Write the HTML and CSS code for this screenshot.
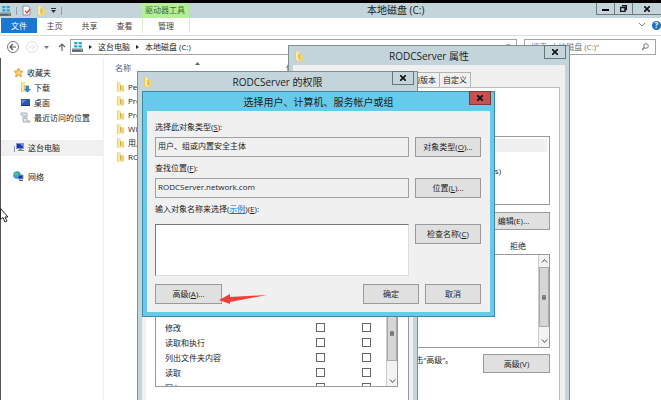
FILE: index.html
```
<!DOCTYPE html>
<html lang="zh-CN">
<head>
  <meta charset="UTF-8" />
  <meta name="viewport" content="width=device-width, initial-scale=1.0"/>
  <title>本地磁盘 (C:)</title>
  <link rel="stylesheet" href="styles.css">
</head>
<body>
  <svg class="defs" width="0" height="0" aria-hidden="true">
    <symbol id="folder" viewBox="0 0 10 10">
      <path d="M1 0h4v10H1z" fill="#e8cb67"/>
      <path d="M2 0l3 1v9l-3-1z" fill="#f8e9a4"/>
      <path d="M5 3h4v7H5z" fill="#edd47a"/>
      <path d="M5 3v5" stroke="#c8a53c" stroke-width="1"/>
    </symbol>
    <symbol id="drive" viewBox="0 0 10 11">
      <path d="M2 1h3v2H2zM6 1h3v2H6zM2 4h3v2H2zM6 4h3v2H6z" fill="#22a5dc"/>
      <path d="M0 7h10v3H0z" fill="#52646c"/>
      <path d="M0 7h10v1H0z" fill="#a4b0b5"/>
      <path d="M8 9h1" stroke="#6ff06f"/>
    </symbol>
    <symbol id="computer" viewBox="0 0 12 10">
      <path d="M3 0h8v6H3z" fill="#8899bb"/>
      <path d="M4 1h6v4H4z" fill="#1d36b4"/>
      <path d="M7 1h3v3z" fill="#6b8be8"/>
      <path d="M6 6h3v1h2v1H5V7h1z" fill="#7e8894"/>
      <path d="M1 3h1v6H1z" fill="#8d99a6"/>
    </symbol>
  </svg>

  <div class="explorer">
    <header class="titlebar">
      <div class="quick">
        <svg width="11" height="12"><use href="#drive"/></svg>
        <i></i>
        <svg width="9" height="11" viewBox="0 0 9 11"><path d="M1 1h5l2 2v7H1z" fill="#fff" stroke="#8a9398"/><path d="M3 6l2 2 3-4" fill="none" stroke="#d8452e" stroke-width="1.3"/></svg>
        <svg width="10" height="11"><use href="#folder"/></svg>
        <svg width="5" height="5" viewBox="0 0 5 5"><path d="M0 0h5v1H0zM0 2h5L2.500 5z" fill="#333"/></svg>
        <i></i>
      </div>
      <div class="tool-tab">驱动器工具</div>
      <h1>本地磁盘 (C:)</h1>
      <div class="win-buttons">
        <button aria-label="最小化"><svg width="7" height="7"><path d="M0 4h7v2H0z"/></svg></button>
        <button aria-label="还原"><svg width="7" height="7"><path d="M2 .5h4.500v4H5M.5 2.500H5v4H.5z" fill="none" stroke="#111" stroke-width="1.400"/></svg></button>
        <button class="wide" aria-label="关闭"><svg width="6" height="6"><path d="M0 0l6 6M6 0L0 6" stroke="#111" stroke-width="1.600"/></svg></button>
      </div>
    </header>

    <nav class="ribbon">
      <a class="file" href="#">文件</a>
      <a href="#">主页</a>
      <a href="#">共享</a>
      <a href="#">查看</a>
      <a class="manage" href="#">管理</a>
      <svg class="chevron" width="6" height="4" viewBox="0 0 6 4"><path d="M0 0l3 3 3-3" fill="none" stroke="#888"/></svg>
      <button class="help" aria-label="帮助">?</button>
    </nav>

    <div class="address-row">
      <svg class="arrows" width="60" height="14" viewBox="0 0 60 14">
        <circle cx="7" cy="7" r="5.500" fill="none" stroke="#777"/>
        <path d="M10 7H4M7 4L4 7l3 3" fill="none" stroke="#555" stroke-width="1.200"/>
        <circle cx="26" cy="7" r="5.500" fill="none" stroke="#e2e2e2"/>
        <path d="M23 7h6M26 4l3 3-3 3" fill="none" stroke="#e2e2e2"/>
        <path d="M38 6h5l-2.500 3z" fill="#777"/>
        <path d="M56 11V4M53 7l3-3 3 3" fill="none" stroke="#666" stroke-width="1.200"/>
      </svg>
      <div class="address">
        <svg width="11" height="12"><use href="#drive"/></svg>
        <b></b><span>这台电脑</span><b></b><span>本地磁盘 (C:)</span>
        <svg class="refresh" width="7" height="7" viewBox="0 0 7 7"><path d="M6 4a2.500 2.500 0 1 1-1-2.500M5 0v2H3" fill="none" stroke="#555"/></svg>
      </div>
      <div class="search">
        <input type="text" placeholder="搜索&quot;本地磁盘 (C:)&quot;" aria-label="搜索">
        <svg width="7" height="8" viewBox="0 0 7 8"><circle cx="4" cy="3" r="2.300" fill="none" stroke="#777"/><path d="M2.500 4.500L0 7" stroke="#777" stroke-width="1.300"/></svg>
      </div>
    </div>

    <div class="content">
      <aside>
        <a class="root" href="#"><svg width="11" height="11" viewBox="0 0 11 11"><path d="M5.500 1l1.400 3 3.100.4-2.300 2.200.6 3.200-2.800-1.600-2.800 1.600.6-3.200L1 4.400 4.100 4z" fill="#fbd36a" stroke="#e59a35"/></svg>收藏夹</a>
        <a href="#"><svg width="11" height="11" viewBox="0 0 11 11"><use href="#folder" width="10" height="10"/><path d="M6 4h3v3h2L7.500 10.500 4 7h2z" fill="#2d85d4"/></svg>下载</a>
        <a href="#"><svg width="11" height="11" viewBox="0 0 11 11"><path d="M1 2h9v7H1z" fill="#2459ad"/><path d="M2 3h4l-4 4z" fill="#5f9be0"/><path d="M1 8h9v1H1z" fill="#193c78"/></svg>桌面</a>
        <a href="#"><svg width="11" height="11" viewBox="0 0 11 11"><path d="M1 1h6v8h3v1H3V3H1z" fill="#e5e8ea" stroke="#a9b1b5"/><path d="M4 4h2M4 6h2" stroke="#8aa"/></svg>最近访问的位置</a>
        <a class="root current" href="#"><svg width="12" height="10"><use href="#computer"/></svg>这台电脑</a>
        <a class="root" href="#"><svg width="12" height="11" viewBox="0 0 12 11"><circle cx="4" cy="4" r="3.800" fill="#2f9fd8"/><path d="M2 1l3 1-1 3-3-1zM4 6l2-1v2z" fill="#5cc06a"/><path d="M5 4h5v4H5z" fill="#1d36b4" stroke="#8899bb"/><path d="M6 9h4v1H6z" fill="#667"/></svg>网络</a>
      </aside>
      <main>
        <div class="col-head">
          <span>名称</span>
          <svg width="5" height="3" viewBox="0 0 5 3"><path d="M0 3l2.500-3L5 3z" fill="#666"/></svg>
          <span>修改日期</span>
        </div>
        <ul class="files">
          <li><svg width="9" height="10"><use href="#folder"/></svg>PerfLogs</li>
          <li><svg width="9" height="10"><use href="#folder"/></svg>Program Files</li>
          <li><svg width="9" height="10"><use href="#folder"/></svg>Program Files (x86)</li>
          <li><svg width="9" height="10"><use href="#folder"/></svg>Windows</li>
          <li><svg width="9" height="10"><use href="#folder"/></svg>用户</li>
          <li><svg width="9" height="10"><use href="#folder"/></svg>RODCServer</li>
        </ul>
      </main>
    </div>
  </div>

  <section class="window properties">
    <header>
      <svg width="10" height="10"><use href="#folder"/></svg>
      <h2>RODCServer 属性</h2>
      <button class="close" aria-label="关闭"><svg width="6" height="6"><path d="M0 0l6 6M6 0L0 6" stroke="#111" stroke-width="1.600"/></svg></button>
    </header>
    <div class="body">
      <div class="tabs">
        <button>以前的版本</button>
        <button>自定义</button>
      </div>
      <div class="panel">
        <div class="groups">
          <p class="selected"></p>
          <p>(RODC\Administrators)</p>
        </div>
        <button class="edit">编辑(E)...</button>
        <p class="deny">拒绝</p>
        <div class="rights">
          <div class="scroll">
            <svg width="7" height="4" viewBox="0 0 7 4"><path d="M1 3.500l2.500-3 2.500 3" fill="none" stroke="#555"/></svg>
            <span></span>
            <svg width="7" height="4" viewBox="0 0 7 4"><path d="M1 .5l2.500 3 2.500-3" fill="none" stroke="#555"/></svg>
          </div>
        </div>
        <div class="more">
          <p>单击“高级”。</p>
          <button>高级(V)</button>
        </div>
      </div>
    </div>
  </section>

  <section class="window permissions">
    <header>
      <svg width="10" height="10"><use href="#folder"/></svg>
      <h2>RODCServer 的权限</h2>
      <button class="close" aria-label="关闭"><svg width="6" height="6"><path d="M0 0l6 6M6 0L0 6" stroke="#111" stroke-width="1.600"/></svg></button>
    </header>
    <div class="body">
      <div class="panel">
        <div class="perm-list">
          <div class="rows">
            <div><span></span><input type="checkbox" aria-label="允许完全控制"><input type="checkbox" aria-label="拒绝完全控制"></div>
            <div><span>修改</span><input type="checkbox" aria-label="允许修改"><input type="checkbox" aria-label="拒绝修改"></div>
            <div><span>读取和执行</span><input type="checkbox" aria-label="允许读取和执行"><input type="checkbox" aria-label="拒绝读取和执行"></div>
            <div><span>列出文件夹内容</span><input type="checkbox" aria-label="允许列出文件夹内容"><input type="checkbox" aria-label="拒绝列出文件夹内容"></div>
            <div><span>读取</span><input type="checkbox" aria-label="允许读取"><input type="checkbox" aria-label="拒绝读取"></div>
            <div><span>写入</span><input type="checkbox" aria-label="允许写入"><input type="checkbox" aria-label="拒绝写入"></div>
          </div>
          <div class="scroll">
            <span></span>
            <svg width="7" height="4" viewBox="0 0 7 4"><path d="M1 .5l2.500 3 2.500-3" fill="none" stroke="#555"/></svg>
          </div>
        </div>
      </div>
    </div>
  </section>

  <section class="window select-user">
    <header>
      <h2>选择用户、计算机、服务帐户或组</h2>
      <button class="close" aria-label="关闭"><svg width="6" height="6"><path d="M0 0l6 6M6 0L0 6" stroke="#111" stroke-width="1.600"/></svg></button>
    </header>
    <form class="body">
      <label for="type">选择此对象类型(<u>S</u>):</label>
      <input type="text" id="type" value="用户、组或内置安全主体" readonly>
      <button type="button">对象类型(<u>O</u>)...</button>

      <label for="location">查找位置(<u>F</u>):</label>
      <input type="text" id="location" value="RODCServer.network.com" readonly>
      <button type="button">位置(<u>L</u>)...</button>

      <label for="names">输入对象名称来选择(<a href="#">示例</a>)(<u>E</u>):</label>
      <textarea id="names"></textarea>
      <button type="button">检查名称(<u>C</u>)</button>

      <div class="actions">
        <button class="advanced" type="button">高级(<u>A</u>)...</button>
        <button type="button">确定</button>
        <button type="button">取消</button>
      </div>
    </form>
    <svg class="pointer" width="48" height="12" viewBox="0 0 48 12"><path d="M0 7L11 1v3L48 2 11 9v2z" fill="#ee3f3c"/></svg>
  </section>

  <svg class="cursor" width="9" height="15" viewBox="0 0 9 15"><path d="M.5.500v11l2.500-2 2 4.500 2-1-2-4h3z" fill="#fff" stroke="#222"/></svg>
</body>
</html>
```
FILE: styles.css
```
* {
  box-sizing: border-box;
}
body {
  margin: 0;
  height: 100vh;
  overflow: hidden;
  position: relative;
  background-color: #fff;
  color: #1c1c1c;
  font-family: "Open Sans", "Noto Sans CJK SC", sans-serif;
  font-size: 8px;
  line-height: 12px;
}
h1, h2, p, ul {
  margin: 0;
  padding: 0;
}
h1, h2 {
  font-size: 10px;
  font-weight: normal;
  line-height: 14px;
}
a {
  color: inherit;
  text-decoration: none;
}
svg {
  display: block;
  flex: none;
}
button, input, textarea {
  font: inherit;
  color: inherit;
  margin: 0;
  padding: 0;
  border-radius: 0;
}
button {
  display: flex;
  align-items: center;
  justify-content: center;
  white-space: pre;
  background-color: #e0e0e0;
  border: 1px solid #9a9a9a;
}
.defs {
  position: absolute;
}

/* explorer */
.explorer {
  display: flex;
  flex-direction: column;
  height: 100%;
  border-top: 3px solid #000;
}
.titlebar {
  display: grid;
  grid-template-columns: 141px 48px 1fr auto;
  height: 15px;
  background-color: #c3d5da;
}
.quick {
  display: flex;
  align-items: center;
  gap: 5px;
}
.quick i {
  width: 1px;
  height: 8px;
  background-color: #8fa0a6;
}
.tool-tab {
  background-color: #b4ee96;
  color: #3c6a35;
  text-align: center;
  line-height: 14px;
}
.titlebar h1 {
  padding-left: 178px;
}
.win-buttons {
  display: flex;
  height: 12px;
}
.win-buttons button {
  width: 18px;
  border-color: #6d7b80;
  border-width: 0 0 1px 1px;
  background: none;
}
.win-buttons .wide {
  width: 29px;
}
.ribbon {
  display: flex;
  align-items: center;
  height: 18px;
  padding: 0 0 3px 1px;
  border-bottom: 1px solid #d8dadc;
  color: #444;
}
.ribbon a {
  width: 35px;
  text-align: center;
  line-height: 15px;
}
.ribbon .file {
  width: 36px;
  background-color: #1a78d2;
  color: #fff;
}
.ribbon .manage {
  width: 48px;
  border: 1px solid #dcecd6;
  border-width: 0 1px;
}
.chevron {
  margin-left: auto;
}
.ribbon .help {
  width: 9px;
  height: 9px;
  margin: 0 0 0 7px;
  border: none;
  border-radius: 50%;
  background-color: #1a6fc4;
  color: #fff;
  font-weight: bold;
}
.address-row {
  display: flex;
  align-items: center;
  gap: 4px;
  padding: 3px 5px 3px 6px;
}
.address, .search {
  display: flex;
  align-items: center;
  height: 16px;
  border: 1px solid #a5a5a5;
}
.address {
  flex: 1;
  gap: 6px;
  padding: 0 5px 0 1px;
}
.address b {
  border: 2px solid transparent;
  border-left: 3px solid #222;
  border-right: none;
}
.refresh {
  margin-left: auto;
}
.search {
  width: 132px;
  margin-left: 3px;
  padding: 0 6px;
}
.search input {
  flex: 1;
  min-width: 0;
  border: none;
  outline: none;
  background: none;
}
.search input::placeholder {
  color: #777;
}
.content {
  display: flex;
  flex: 1;
  min-height: 0;
  border-left: 1px solid #555;
}
aside {
  width: 103px;
  padding-top: 7px;
  border-right: 1px solid #f0f0f0;
}
aside a {
  display: flex;
  align-items: center;
  gap: 3px;
  height: 15px;
  padding-left: 19px;
}
aside .root {
  padding-left: 12px;
}
aside .current {
  height: 16px;
  margin: 15px 0 13px;
  background-color: #f1f1f1;
}
main {
  flex: 1;
}
.col-head {
  display: grid;
  grid-template-columns: 80px 91px 1fr;
  height: 14px;
  margin-bottom: 8px;
  padding: 4px 11px 0;
  color: #44608a;
}
.files {
  list-style: none;
}
.files li {
  display: flex;
  align-items: center;
  gap: 3px;
  height: 14px;
  padding-left: 12px;
}

/* windows */
.window {
  position: absolute;
  display: flex;
  flex-direction: column;
  background-color: #c3d5da;
  border: 1px solid #7f8f94;
}
.window header {
  position: relative;
  display: flex;
  align-items: center;
  flex: none;
  height: 19px;
}
.window header > svg {
  margin-left: 5px;
}
.window h2 {
  position: absolute;
  left: 0;
  right: 0;
  text-align: center;
}
.window .close {
  position: absolute;
  top: -1px;
  right: 3px;
  width: 22px;
  height: 14px;
  background-color: #c3d5da;
  border-color: #66757a;
}
.window .body {
  flex: 1;
  margin: 0 4px 4px;
  background-color: #f0f0f0;
}
.window .panel {
  background-color: #fff;
}
.scroll {
  display: flex;
  flex-direction: column;
  align-items: center;
  width: 11px;
  margin-left: auto;
  background-color: #f3f3f3;
  border-left: 1px solid #ccc;
}
.scroll span {
  align-self: stretch;
  border: 1px solid #aaa;
  background: linear-gradient(#666, #666) center / 4px 1px no-repeat, linear-gradient(#888, #888) center / 4px 5px no-repeat, #d6d6d6;
}

.properties {
  left: 288px;
  top: 45px;
  bottom: 0;
  width: 282px;
  border-bottom: none;
}
.properties .body, .permissions .body {
  margin-bottom: 0;
}
.properties .body {
  display: flex;
  flex-direction: column;
  padding: 7px 5px 0;
}
.tabs {
  display: flex;
  padding-left: 94px;
}
.tabs button {
  height: 15px;
  padding: 0 3px;
  background-color: #f0f0f0;
  border-color: #b4b4b4;
  border-bottom: none;
}
.tabs button + button {
  border-left: none;
}
.properties .panel {
  flex: 1;
  padding: 48px 9px 0;
  border: 1px solid #bbb;
  border-bottom: none;
}
.groups {
  height: 69px;
  padding: 2px;
  border: 1px solid #999;
  text-align: right;
}
.groups p {
  padding-right: 46px;
}
.groups .selected {
  height: 13px;
  margin-bottom: 13px;
  background-color: #f0f0f0;
}
.edit {
  width: 67px;
  height: 18px;
  margin: 7px 0 10px auto;
  padding-right: 6px;
}
.deny {
  padding-right: 24px;
  text-align: right;
}
.rights {
  display: flex;
  height: 94px;
  margin-top: 2px;
  border: 1px solid #999;
}
.rights .scroll {
  justify-content: space-between;
  padding: 4px 0;
}
.rights .scroll span {
  height: 60px;
  margin-bottom: 8px;
}
.more {
  display: flex;
  justify-content: flex-end;
  gap: 30px;
  padding-top: 6px;
}
.more p {
  white-space: nowrap;
}
.more button {
  width: 67px;
  height: 19px;
  flex: none;
}

.permissions {
  left: 137px;
  top: 71px;
  bottom: 0;
  width: 281px;
  border-bottom: none;
}
.permissions .body {
  display: flex;
  padding: 0 4px;
}
.permissions .panel {
  flex: 1;
  padding: 213px 10px 0 9px;
  border-right: 1px solid #999;
}
.perm-list {
  display: flex;
  height: 83px;
  overflow: hidden;
  border: 1px solid #999;
}
.rows {
  flex: 1;
}
.rows div {
  display: grid;
  grid-template-columns: 1fr 46px 24px;
  align-items: center;
  height: 15px;
  padding-left: 9px;
}
.rows input {
  appearance: none;
  width: 9px;
  height: 9px;
  border: 1px solid #666;
  background-color: #fff;
}
.perm-list .scroll span {
  height: 56px;
  margin-bottom: 18px;
}

.select-user {
  left: 142px;
  top: 91px;
  width: 353px;
  background-color: #66cbea;
  border-color: #3d8ba5;
}
.select-user .close {
  background-color: #c75050;
  border-color: #7c3b3b;
}
.select-user .body {
  display: grid;
  grid-template-columns: 254px 66px;
  column-gap: 6px;
  padding: 10px 8px 8px;
}
.select-user label {
  grid-column: 1 / -1;
  height: 16px;
}
.select-user label a {
  color: #1a73d0;
  text-decoration: underline;
}
.select-user input, .select-user textarea {
  width: 254px;
  height: 20px;
  margin-bottom: 5px;
  padding: 0 2px 3px;
  border: 1px solid #a0a0a0;
  background-color: #f0f0f0;
}
.select-user textarea {
  height: 52px;
  margin-top: 5px;
  margin-bottom: 8px;
  border-color: #777 #ddd #ddd #777;
  background-color: #fff;
  resize: none;
}
.select-user button {
  height: 20px;
}
.select-user textarea + button {
  margin-top: 5px;
}
.actions {
  display: flex;
  grid-column: 1 / -1;
  gap: 6px;
}
.actions button {
  width: 56px;
}
.actions .advanced {
  width: 67px;
  margin-right: auto;
}
.pointer {
  position: absolute;
  left: 76px;
  top: 201px;
}

.cursor {
  position: absolute;
  left: 0;
  top: 208px;
}
```
